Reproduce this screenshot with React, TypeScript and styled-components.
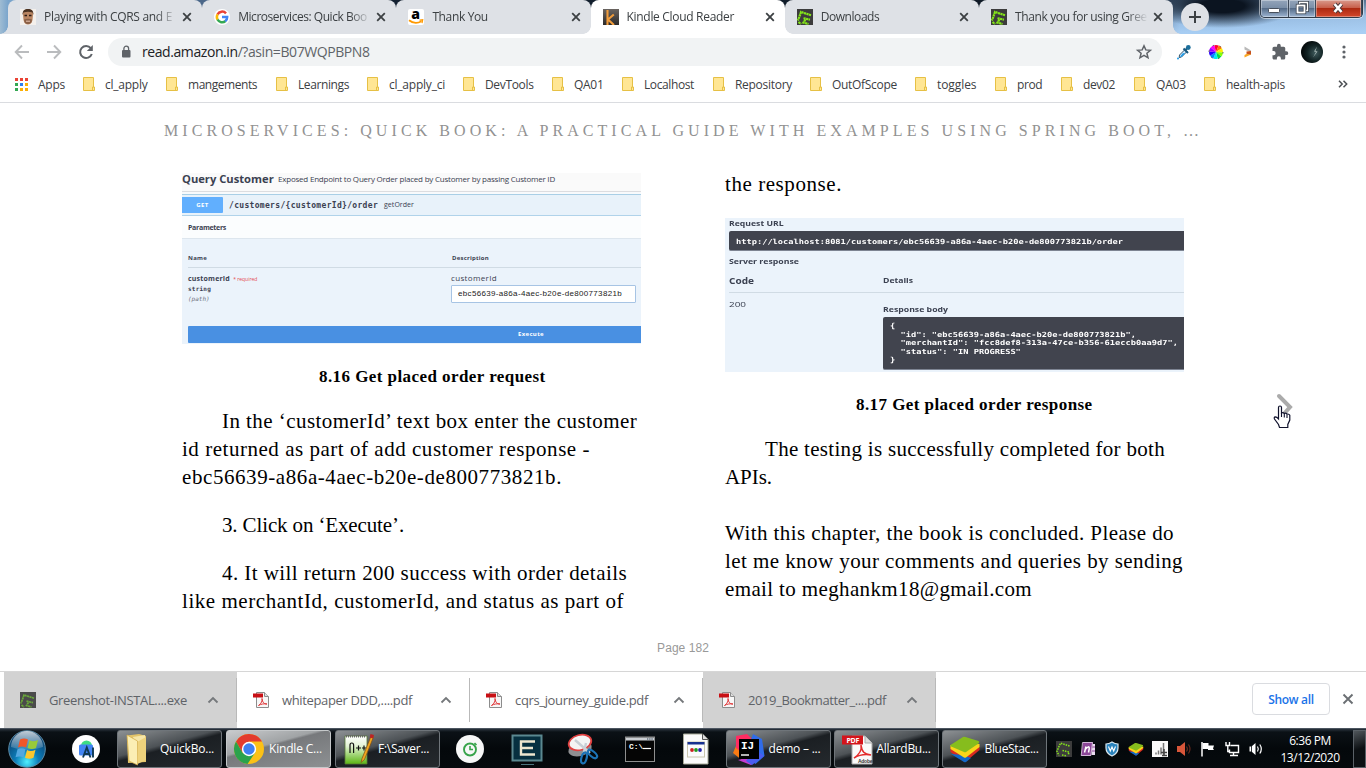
import React from "react";
import styled, { createGlobalStyle, css } from "styled-components";

const UI = `"Open Sans", "Noto Sans", sans-serif`;
const SERIF = `"Liberation Serif", serif`;
const MONO = `"DejaVu Sans Mono", monospace`;

const Global = createGlobalStyle`
  * { box-sizing: border-box; }
  body { margin: 0; background: #fff; overflow: hidden; }
  svg { display: block; flex: none; overflow: visible; }
`;

const Screen = styled.div`
  width: 1366px;
  height: 768px;
  display: flex;
  flex-direction: column;
  overflow: hidden;
  font-family: ${UI};
  font-size: 12px;
  color: #3c4043;
`;

/* ---------- tab strip ---------- */
const TabStrip = styled.div`
  position: relative;
  height: 34px;
  flex: none;
  display: flex;
  padding-left: 8px;
  background:
    radial-gradient(ellipse 75px 22px at 1222px 6px, #0b1420 30%, rgba(15, 26, 40, 0) 100%),
    linear-gradient(to bottom, rgba(60, 84, 112, 0.75) 0, rgba(150, 186, 222, 0.5) 16px, rgba(170, 208, 245, 0.9) 32px) 1165px 0 / 201px 34px no-repeat,
    linear-gradient(to right, #9fbcd3 0, #7aa5cc 8px, #4c6a8c 190px, #4a6486 215px, #142131 380px, #0d1722 1160px, #88b0dc 1180px, #a3c6ea 1366px);
`;

const Tab = styled.div<{ $active?: boolean; $first?: boolean; $last?: boolean }>`
  position: relative;
  width: 194.2px;
  height: 34px;
  flex: none;
  display: flex;
  align-items: center;
  padding: 0 11px 0 12px;
  gap: 8px;
  border-radius: 8px 8px 0 0;
  background: ${(p) => (p.$active ? "#fff" : "#dee1e6")};
  z-index: ${(p) => (p.$active ? 2 : 1)};
  ${(p) =>
    (p.$active || p.$first) &&
    css`
      &::before {
        content: "";
        position: absolute;
        left: -8px;
        bottom: 0;
        width: 8px;
        height: 8px;
        background: radial-gradient(circle at 0 0, transparent 7.5px, ${p.$active ? "#fff" : "#dee1e6"} 8px);
      }
    `}
  ${(p) =>
    (p.$active || p.$last) &&
    css`
      &::after {
        content: "";
        position: absolute;
        right: -8px;
        bottom: 0;
        width: 8px;
        height: 8px;
        background: radial-gradient(circle at 100% 0, transparent 7.5px, ${p.$active ? "#fff" : "#dee1e6"} 8px);
      }
    `}
`;

const TabTitle = styled.span<{ $ls: number }>`
  flex: 1;
  margin-right: -3px;
  white-space: nowrap;
  letter-spacing: ${(p) => p.$ls}px;
  line-height: 18px;
  mask-image: linear-gradient(to right, #000 calc(100% - 22px), transparent calc(100% - 1px));
`;

const TabDivider = styled.i`
  position: absolute;
  right: -1px;
  top: 8px;
  width: 1px;
  height: 19px;
  background: #80868b;
`;

const NewTab = styled.div`
  width: 28px;
  height: 28px;
  margin: 3px 0 0 8px;
  border-radius: 50%;
  background: #dee1e6;
  display: grid;
  place-items: center;
`;

const WindowControls = styled.div`
  display: flex;
  width: 103px;
  height: 18px;
  margin-left: 51px;
  border: 1px solid #2f3a48;
  border-top: 0;
  border-radius: 0 0 5px 5px;
  box-shadow: 0 0 0 1px rgba(255, 255, 255, 0.5);
  overflow: hidden;
`;

const WindowButton = styled.div<{ $w: number; $close?: boolean }>`
  width: ${(p) => p.$w}px;
  padding-bottom: 1px;
  display: grid;
  place-items: center;
  border-right: 1px solid #3c4858;
  box-shadow: inset 0 0 0 1px rgba(255, 255, 255, 0.35);
  background: ${(p) =>
    p.$close
      ? "linear-gradient(#d99a8c 0, #c8604c 45%, #ad2a12 50%, #d3482c 100%)"
      : "linear-gradient(#94a5ba 0, #7b8fa8 45%, #566c88 50%, #9db5d2 100%)"};
`;

/* ---------- toolbar ---------- */
const Toolbar = styled.div`
  height: 36px;
  flex: none;
  display: flex;
  align-items: center;
  background: #fff;
`;

const ToolSlot = styled.div<{ $w?: number }>`
  width: ${(p) => p.$w ?? 32}px;
  display: flex;
  justify-content: center;
`;

const AddressBar = styled.div`
  width: 1054px;
  height: 28px;
  display: flex;
  align-items: center;
  border-radius: 14px;
  background: #f1f3f4;
  padding: 0 10px 0 12px;
`;

const Url = styled.span`
  flex: 1;
  margin: -1px 0 0 10px;
  font-size: 14px;
  letter-spacing: -0.42px;
  color: #5f6368;
  b { font-weight: 400; color: #202124; }
`;

const BookmarkBar = styled.div`
  height: 33px;
  flex: none;
  display: flex;
  align-items: center;
  padding: 0 18px 4px 15px;
  border-bottom: 1px solid #dadce0;
  background: #fff;
`;

const Bookmark = styled.div<{ $w: number; $ls: number }>`
  width: ${(p) => p.$w}px;
  flex: none;
  display: flex;
  align-items: center;
  gap: 10px;
  white-space: nowrap;
  letter-spacing: ${(p) => p.$ls}px;
`;

/* ---------- reader ---------- */
const Reader = styled.main`
  position: relative;
  flex: 1;
  background: #fff;
  padding-top: 18px;
`;

const BookTitle = styled.h1`
  margin: 0 0 0 164px;
  font: 400 16px/20px ${SERIF};
  letter-spacing: 4.07px;
  white-space: nowrap;
  color: #929292;
`;

const Spread = styled.div`
  display: flex;
  gap: 84px;
  padding: 32px 182px 0;
  height: 499px;
`;

const Page = styled.article`
  width: 459px;
  color: #000;
`;

const Line = styled.p<{ $ls: number; $indent?: boolean; $before?: number }>`
  margin: ${(p) => p.$before ?? 0}px 0 0 ${(p) => (p.$indent ? 40 : 0)}px;
  font: 400 21px/28px ${SERIF};
  letter-spacing: ${(p) => p.$ls}px;
  white-space: nowrap;
`;

const Caption = styled.p<{ $left: number; $before: number }>`
  margin: ${(p) => p.$before}px 0 0 ${(p) => p.$left}px;
  font: 700 17px/22px ${SERIF};
  letter-spacing: 0.43px;
  white-space: nowrap;
`;

const PageNumber = styled.div`
  text-align: center;
  font: 12px/16px "Liberation Sans", sans-serif;
  letter-spacing: 0.05px;
  color: #999;
`;

const NextPage = styled.div`
  position: absolute;
  left: 1270px;
  top: 287px;
`;

/* ---------- figures ---------- */
const Label = styled.span<{
  $size: number;
  $ls?: number;
  $bold?: boolean;
  $mono?: boolean;
  $color?: string;
  $stretch?: number;
}>`
  display: inline-block;
  white-space: pre;
  font-family: ${(p) => (p.$mono ? MONO : UI)};
  font-size: ${(p) => p.$size}px;
  font-weight: ${(p) => (p.$bold ? 700 : 400)};
  letter-spacing: ${(p) => p.$ls ?? 0}px;
  color: ${(p) => p.$color ?? "#3b4151"};
  transform: scaleX(${(p) => p.$stretch ?? 1});
  transform-origin: 0 50%;
`;

const Figure = styled.figure<{ $h: number; $bg: string; $before?: number }>`
  margin: ${(p) => p.$before ?? 0}px 0 0;
  height: ${(p) => p.$h}px;
  background: ${(p) => p.$bg};
  line-height: 10px;
`;

const FigureRow = styled.div<{ $h: number; $pad?: number; $top?: number; $bottom?: number; $bg?: string; $line?: string }>`
  height: ${(p) => p.$h}px;
  display: flex;
  align-items: center;
  padding: ${(p) => p.$top ?? 0}px 0 ${(p) => p.$bottom ?? 0}px ${(p) => p.$pad ?? 0}px;
  background: ${(p) => p.$bg ?? "transparent"};
  border-bottom: ${(p) => (p.$line ? `1px solid ${p.$line}` : "0")};
`;

const Cell = styled.div<{ $w: number }>`
  width: ${(p) => p.$w}px;
  flex: none;
`;

const GetBadge = styled.div`
  width: 41px;
  height: 16px;
  margin-right: 6px;
  display: grid;
  place-items: center;
  border-radius: 0 1px 1px 0;
  background: #61affe;
`;

const TableRule = styled.div<{ $left: number }>`
  height: 1px;
  margin-left: ${(p) => p.$left}px;
  background: #d0dbe4;
`;

const ParamRow = styled.div`
  display: flex;
  height: 58px;
  padding: 4px 0 0 6px;
`;

const ParamName = styled.div`
  width: 263px;
  display: flex;
  flex-direction: column;
  align-items: flex-start;
`;

const ParamInput = styled.div`
  width: 185px;
  height: 18px;
  margin-top: 2px;
  padding: 0 0 2px 6px;
  display: flex;
  align-items: center;
  border: 1px solid #a7c4e4;
  border-radius: 1px;
  background: #fff;
  font: 8px "Liberation Sans", sans-serif;
  letter-spacing: 0.33px;
  color: #222;
`;

const ExecuteBar = styled.div`
  height: 17px;
  margin-left: 6px;
  padding: 0 0 1px 330px;
  display: flex;
  align-items: center;
  border-radius: 1px 0 0 1px;
  background: #4990e2;
`;

const DarkBox = styled.div<{ $h: number; $left: number; $pad: number; $top?: number }>`
  height: ${(p) => p.$h}px;
  margin-left: ${(p) => p.$left}px;
  padding-left: ${(p) => p.$pad}px;
  padding-top: ${(p) => p.$top ?? 0}px;
  display: flex;
  flex-direction: column;
  justify-content: center;
  align-items: flex-start;
  line-height: 8.5px;
  border-radius: 2px 0 0 2px;
  border-bottom: 1px solid #7d8492;
  background: #41444e;
`;

const ResponseArea = styled.div`
  display: flex;
  padding-left: 4px;
`;

/* ---------- download shelf ---------- */
const Shelf = styled.div`
  height: 57px;
  flex: none;
  display: flex;
  padding-left: 4px;
  border-top: 1px solid #d6d6d6;
  background: #fff;
`;

const Download = styled.div<{ $shaded?: boolean; $ls: number }>`
  position: relative;
  width: 233px;
  display: flex;
  align-items: center;
  padding: 0 18px 0 16px;
  background: ${(p) => (p.$shaded ? "#d2d2d2" : "#fff")};
  color: #5f6368;
  font-size: 13px;
  letter-spacing: ${(p) => p.$ls}px;
  span { flex: 1; margin-left: 13px; }
  &::after {
    content: "";
    position: absolute;
    right: 0;
    top: 6px;
    bottom: 6px;
    width: 1px;
    background: #b9b9b9;
  }
`;

const ShowAll = styled.button`
  width: 78px;
  height: 32px;
  margin: 11px 12px 0 316px;
  padding: 0;
  border: 1px solid #dadce0;
  border-radius: 4px;
  background: #fff;
  color: #1a73e8;
  font: 600 12px ${UI};
  letter-spacing: -0.33px;
`;

/* ---------- taskbar ---------- */
const Taskbar = styled.div`
  height: 40px;
  flex: none;
  display: flex;
  align-items: center;
  border-top: 1px solid #4c5560;
  background: linear-gradient(#2a333d 0, #0b1116 3px, #04080b 50%, #060a0d 100%);
`;

const Slot = styled.div<{ $w: number; $ml?: number }>`
  width: ${(p) => p.$w}px;
  margin-left: ${(p) => p.$ml ?? 0}px;
  display: flex;
  justify-content: center;
  flex: none;
`;

const TaskButton = styled.div<{ $active?: boolean; $ml?: number; $ls: number }>`
  width: 105px;
  height: 38px;
  margin-left: ${(p) => p.$ml ?? 0}px;
  margin-right: 4px;
  flex: none;
  display: flex;
  align-items: center;
  gap: 4px;
  padding-left: 6px;
  border: 1px solid ${(p) => (p.$active ? "#c5c8ca" : "#6f757a")};
  border-radius: 3px;
  color: #fff;
  letter-spacing: ${(p) => p.$ls}px;
  white-space: nowrap;
  background: ${(p) =>
    p.$active
      ? "linear-gradient(165deg, #c9cbcd 0, #a0a3a5 38%, #77797c 42%, #8d9092 100%)"
      : "linear-gradient(165deg, #8d9194 0, #4d5256 40%, #1b1f23 48%, #252a2e 100%)"};
`;

const Clock = styled.div`
  width: 85px;
  text-align: center;
  color: #fff;
  line-height: 17px;
  letter-spacing: -0.45px;
`;

const ShowDesktop = styled.div`
  width: 13px;
  height: 38px;
  border: 1px solid #5a6167;
  background: linear-gradient(160deg, #50565b, #0c1013 50%);
`;

/* ---------- icons ---------- */
const Cross = () => (
  <svg width="8" height="8" viewBox="0 0 8 8" stroke="#3c4043" strokeWidth="1.8" fill="none">
    <path d="M.2.200 7.800 7.800M7.800.2.200 7.800" />
  </svg>
);

const Face = () => (
  <svg width="16" height="16" viewBox="0 0 16 16">
    <rect width="16" height="16" fill="#f4f0ec" />
    <path d="M3 6C2.500 2 5 .5 8 .5s5.500 1.500 5 5.500l-.5 5c-.5 3-2.500 4.500-4.500 4.500S4 14 3.500 11z" fill="#b98562" />
    <path d="M2.500 6C2.500 1.500 4.500 0 8 0s5.500 1.500 5.500 6L12.500 3.500Q8 2 3.500 3.500z" fill="#4a3222" />
    <path d="M4 10.500q4-1.500 8 0l-.6 3Q8 16.500 4.600 13.500z" fill="#8a6047" />
    <path d="M4.500 6.500h2.500M9 6.500h2.500" stroke="#2c1a12" strokeWidth="1.300" />
    <path d="M6 12.200h4" stroke="#e9c4b0" strokeWidth="1" />
  </svg>
);

const Google = () => (
  <svg width="16" height="16" viewBox="0 0 16 16">
    <circle cx="8" cy="8" r="8" fill="#fff" />
    <g fill="none" strokeWidth="2.500">
      <path d="M12 4.300A5.200 5.200 0 0 0 3.500 5.500" stroke="#ea4335" />
      <path d="M3.600 5.300a5.400 5.400 0 0 0 0 5.400" stroke="#fbbc05" />
      <path d="M3.500 10.500a5.200 5.200 0 0 0 8 1.500" stroke="#34a853" />
      <path d="M8 8h5.200a5.300 5.300 0 0 1-2 4.300" stroke="#4285f4" />
    </g>
  </svg>
);

const Amazon = () => (
  <svg width="16" height="16" viewBox="0 0 16 16">
    <rect width="16" height="16" rx="2" fill="#fff" />
    <text x="7.500" y="9.500" textAnchor="middle" fontFamily="Open Sans" fontWeight="800" fontSize="14">a</text>
    <path d="M1 11.200q6 4.800 12.500 1" fill="none" stroke="#f90" strokeWidth="1.800" />
    <path d="M11.500 11.200l3.200-.4-.7 3.400" fill="none" stroke="#f90" strokeWidth="1.200" />
  </svg>
);

const Kindle = () => (
  <svg width="16" height="16" viewBox="0 0 16 16">
    <defs>
      <linearGradient id="kd" x2="0" y2="1"><stop stopColor="#6a6460" /><stop offset="1" stopColor="#2c2a2a" /></linearGradient>
      <clipPath id="kc"><rect width="16" height="16" /></clipPath>
    </defs>
    <rect width="16" height="16" fill="url(#kd)" />
    <path d="M4.500 1v15M10.800 5.500 5 10.500l6 5.500" fill="none" stroke="#f09c3c" strokeWidth="2.100" clipPath="url(#kc)" />
  </svg>
);

const Greenshot = ({ dim }: { dim?: boolean }) => (
  <svg width="16" height="16" viewBox="0 0 16 16">
    <rect width="16" height="16" fill={dim ? "#4a4a4a" : "#3c3c3c"} />
    <path
      d="M14 6.200 4 3 2.500 7.500.8 11.500M1.500 13l2.500 2M6.500 9.200l6.500 1.500M8.500 10.500l-2 3 5 1.500"
      fill="none"
      stroke={dim ? "#6aa83a" : "#84e619"}
      strokeWidth={dim ? 1.7 : 2.2}
      strokeDasharray="2.200 .4"
    />
  </svg>
);

const GreenshotTray = () => (
  <svg width="16" height="16" viewBox="0 0 16 16">
    <rect width="16" height="16" fill="#3c3c3c" />
    <path d="M13.500 5 4.500 2.200 2.500 6.500 1 10.500l2 4M6.500 9.500l6.500 1.500-.8 3M6 14l5 1" fill="none" stroke="#84e619" strokeWidth="1.500" strokeDasharray="1.500 1" />
  </svg>
);

const ArrowIcon = ({ flip }: { flip?: boolean }) => (
  <svg width="16" height="16" viewBox="0 0 16 16" fill="none" stroke="#babcbe" strokeWidth="1.900">
    <path d={flip ? "M1 8h13M8 1.500 14.300 8 8 14.500" : "M15 8H2M8 1.500 1.700 8 8 14.500"} />
  </svg>
);

const Reload = () => (
  <svg width="16" height="16" viewBox="0 0 16 16">
    <path d="M12.800 4.200A6 6 0 1 0 13.800 10" fill="none" stroke="#5f6368" strokeWidth="2" />
    <path d="M14.800 1v6H8.800z" fill="#5f6368" />
  </svg>
);

const Lock = () => (
  <svg width="12" height="14" viewBox="0 0 12 14">
    <rect x="2" y="5" width="8.500" height="7.500" rx="1" fill="#5f6368" />
    <path d="M3.900 5.500V3.500a2.350 2.350 0 0 1 4.700 0v2" fill="none" stroke="#5f6368" strokeWidth="1.300" />
  </svg>
);

const Star = () => (
  <svg width="16" height="16" viewBox="0 0 16 16">
    <path d="M8 1.800l1.800 4.100 4.600.4-3.500 3 1.100 4.500L8 11.400l-4 2.400 1.100-4.500-3.500-3 4.600-.4z" fill="none" stroke="#5f6368" strokeWidth="1.500" />
  </svg>
);

const Dropper = () => (
  <svg width="16" height="16" viewBox="0 0 16 16">
    <path d="M3.500 11 9 5.500 11 7.500 5.500 13l-2.300.6z" fill="#cfeaff" stroke="#35566e" strokeWidth="1" />
    <path d="M4 12.500 7 9l2 .5L5.500 13z" fill="#1e9be8" />
    <path d="M7.500 4.500 12 9M9.500 6 12.800 2.700" stroke="#17587e" strokeWidth="2" />
    <circle cx="12.300" cy="3.500" r="2.400" fill="#1b6f9c" />
    <circle cx="2" cy="14.500" r="1" fill="#1e9be8" />
  </svg>
);

const Wheel = () => (
  <svg width="16" height="16" viewBox="-8 -8 16 16">
    {["#f0f", "#f03", "#f70", "#fe0", "#8f0", "#0d4", "#0ee", "#08f", "#20f", "#90f"].map((c, i) => (
      <path key={c} d="M0 0 0-7A7 7 0 0 1 4.110-5.660Z" fill={c} transform={`rotate(${i * 36 - 50})`} />
    ))}
    <circle r="7" fill="none" stroke="#555" strokeWidth="1" strokeDasharray="1.500 5.830" />
  </svg>
);

const Fold = () => (
  <svg width="16" height="16" viewBox="0 0 16 16">
    <path d="M4.500 2.500 11 6.500v2L4.500 5.500z" fill="#b8b8b8" />
    <path d="M11 7.500v3L4.500 13.500V11z" fill="#f9a825" />
    <path d="M6.500 7.500 11 7v3.500l-4.500-.8z" fill="#c7521e" />
  </svg>
);

const Puzzle = () => (
  <svg width="18" height="18" viewBox="0 0 24 24">
    <path d="M20.500 11H19V7a2 2 0 0 0-2-2h-4V3.500a2.500 2.500 0 0 0-5 0V5H4a2 2 0 0 0-2 2v3.800h1.500a2.700 2.700 0 0 1 0 5.400H2V20c0 1.100.9 2 2 2h3.800v-1.500a2.700 2.700 0 0 1 5.400 0V22H17a2 2 0 0 0 2-2v-4h1.500a2.500 2.500 0 0 0 0-5z" fill="#5f6368" />
  </svg>
);

const Avatar = () => (
  <svg width="22" height="22" viewBox="0 0 22 22">
    <defs>
      <radialGradient id="av" cx=".65" cy=".55" r=".6"><stop stopColor="#3f5a5c" /><stop offset=".6" stopColor="#122324" /><stop offset="1" stopColor="#050b0c" /></radialGradient>
    </defs>
    <circle cx="11" cy="11" r="11" fill="url(#av)" />
    <path d="M16 5.500 13 10.500l2 .5-3 5.500 4.500-6-2-.5z" fill="#a3b3b0" />
  </svg>
);

const Dots = () => (
  <svg width="4" height="16" viewBox="0 0 4 16" fill="#5f6368">
    <circle cx="2" cy="3" r="1.600" /><circle cx="2" cy="8" r="1.600" /><circle cx="2" cy="13" r="1.600" />
  </svg>
);

const AppsGrid = () => (
  <svg width="13" height="13" viewBox="0 0 13 13">
    {["#ea4335", "#ea4335", "#ea4335", "#34a853", "#2d7ff0", "#fbaf05", "#34a853", "#fbaf05", "#fbaf05"].map((c, i) => (
      <rect key={i} x={(i % 3) * 5} y={Math.floor(i / 3) * 5} width="3" height="3" fill={c} />
    ))}
  </svg>
);

const Folder = () => (
  <svg width="12" height="14" viewBox="0 0 12 14">
    <path d="M.5.5h10v9.500h1v3.500H.5z" fill="#ffe694" stroke="#e6c045" />
    <path d="M9.500 13v-3h1.500" fill="none" stroke="#e6c045" />
  </svg>
);

const Pdf = () => (
  <svg width="16" height="16" viewBox="0 0 16 16">
    <path d="M3.500.5h8l4 4v11h-12z" fill="#f7f7f7" stroke="#8c8c8c" />
    <path d="M11.500.5v4h4" fill="#ddd" stroke="#8c8c8c" />
    <rect x="0" y="1.500" width="10" height="4" fill="#c80f14" />
    <path d="M5.500 13.500c3-2 4-5 3.500-7 .5 4 2 5.500 5 5.500-3-.5-6 0-8.500 1.500z" fill="none" stroke="#e0383a" />
  </svg>
);

const CaretUp = () => (
  <svg width="12" height="8" viewBox="0 0 12 8">
    <path d="M1.500 6.500 6 2l4.500 4.500" fill="none" stroke="#75787b" strokeWidth="1.800" />
  </svg>
);

const NextArrow = () => (
  <svg width="26" height="42" viewBox="0 0 26 42">
    <path d="M9 6 20 17l-8 9" fill="none" stroke="#ababab" strokeWidth="4" strokeLinecap="round" />
    <path
      d="M8.500 28.500V17.500q0-1.500 1.500-1.500t1.500 1.500V23q1.500-1 2.800.5 1.500-.8 2.700.6 2-.4 2.800 1.200v4.700l-2 4.500v3H9.500l-1-3-4-5.500q-.8-2 .8-2.200 1.500 0 3.200 2z"
      fill="#fff"
      stroke="#10122c"
      strokeWidth="1.200"
    />
    <path d="M11.500 23v4M14.300 24v3.500M17 24.500v3.500" stroke="#10122c" strokeWidth="1.100" />
  </svg>
);

const StartOrb = () => (
  <svg width="38" height="38" viewBox="0 0 38 38">
    <defs>
      <radialGradient id="orb" cx=".5" cy=".85" r=".8"><stop stopColor="#4ff0ff" /><stop offset=".4" stopColor="#0c7cb8" /><stop offset="1" stopColor="#0a3a66" /></radialGradient>
      <linearGradient id="gl" x2="0" y2="1"><stop stopColor="#fff" stopOpacity=".75" /><stop offset="1" stopColor="#fff" stopOpacity=".12" /></linearGradient>
    </defs>
    <circle cx="19" cy="19" r="18.300" fill="url(#orb)" stroke="#5d8ba5" />
    <path d="M3 17a16 16 0 0 1 32 0q-16 6-32 0z" fill="url(#gl)" />
    <path d="M12 9.500q4-2 8 0l-2 8q-4-1.800-8 0z" fill="#f0562a" />
    <path d="M21.500 10.300q4 2 8.500-.3l-2 8q-4 2-8.500 0z" fill="#98cb3a" />
    <path d="M9.500 19.300q4-2 8 0l-2 8q-4-1.800-8 0z" fill="#52a7e0" />
    <path d="M19 20q4 2 8.500-.3l-2 8q-4 2-8.500 0z" fill="#fcc72e" />
  </svg>
);

const AndroidStudio = () => (
  <svg width="28" height="28" viewBox="0 0 28 28">
    <circle cx="14" cy="14" r="14" fill="#fff" />
    <path d="M9 11a5.500 5.500 0 0 1 11 0z" fill="#3ddc84" />
    <rect x="7" y="9.500" width="14" height="11" rx="1.500" fill="#4285f4" />
    <path d="M11 22.500 14.800 12.500l3.700 10M12 19h5.500M21 12.500v10" stroke="#0f3a55" strokeWidth="1.900" fill="none" />
  </svg>
);

const Explorer = () => (
  <svg width="32" height="34" viewBox="0 0 32 34">
    <path d="M3 3.500 15 2l7 2v26l-18 1z" fill="#e3c46a" />
    <path d="M9 5 21 3l1 25-9 1z" fill="#f6e6a8" />
    <path d="M3 3 13.500 9v24L5 29z" fill="#fbeeb4" stroke="#d4af4e" strokeWidth=".8" />
    <path d="M14 9.500 22 5v23l-8.500 4z" fill="#eed27c" />
  </svg>
);

const Chrome = () => (
  <svg width="32" height="32" viewBox="0 0 32 32">
    <circle cx="16" cy="16" r="15" fill="#fbc116" />
    <path d="M3 8.500A15 15 0 0 1 29 8.500H16L9.500 19.800z" fill="#e33b2e" />
    <path d="M3 8.500A15 15 0 0 0 14.500 31l8-12L9.500 19.800z" fill="#2ba24c" />
    <circle cx="16" cy="16" r="7.200" fill="#fff" />
    <circle cx="16" cy="16" r="5.700" fill="#3f80f0" />
  </svg>
);

const NotepadPP = () => (
  <svg width="32" height="32" viewBox="0 0 32 32">
    <defs><linearGradient id="np" x2="0" y2="1"><stop stopColor="#fff" /><stop offset=".35" stopColor="#e4f3d6" /><stop offset="1" stopColor="#5bb512" /></linearGradient></defs>
    <path d="M3 3h22v28H3z" fill="url(#np)" stroke="#557a38" strokeWidth=".8" />
    <path d="M4 3.200h20" stroke="#666" strokeWidth="2.500" strokeDasharray="1 1" />
    <path d="M8 20v-8q0-2 1.800-2t1.800 2v8M14 15h5M16.500 12.500v5M20 15h4M22 12.500v5" fill="none" stroke="#111" strokeWidth="1.200" />
    <path d="M29.500 2 20 25.500l-1 4 3.500-3L31.500 4z" fill="#f0a51e" stroke="#7b4c16" strokeWidth=".7" />
    <path d="M28.500 1l3.500 1-1 3.500-3.300-1z" fill="#bd2323" />
  </svg>
);

const StopWatch = () => (
  <svg width="28" height="28" viewBox="0 0 28 28">
    <circle cx="14" cy="14" r="14" fill="#f7f7f7" />
    <circle cx="14" cy="14.500" r="6" fill="none" stroke="#37a34a" strokeWidth="1.900" />
    <path d="M14 11V14.500h3M18.500 8l2 2" fill="none" stroke="#37a34a" strokeWidth="1.600" />
  </svg>
);

const Cisdem = () => (
  <svg width="32" height="34" viewBox="0 0 32 34">
    <rect x="1.500" y="3.500" width="29" height="25" fill="#073040" stroke="#5b8890" strokeWidth="2" />
    <path d="M24 9.500H10v13h14M10 16h12" fill="none" stroke="#eee6cf" strokeWidth="2.400" />
    <path d="M10 32.500h13" stroke="#4d757e" />
  </svg>
);

const Snip = () => (
  <svg width="32" height="34" viewBox="0 0 32 34">
    <ellipse cx="13" cy="17" rx="12" ry="7" fill="#8f8f92" transform="rotate(-15 13 17)" />
    <ellipse cx="13" cy="10.500" rx="11.500" ry="7.500" fill="#f4f4f4" stroke="#e04040" strokeWidth="1.800" transform="rotate(-15 13 10.500)" />
    <path d="M8 8 23 21M19 11 16.500 22" stroke="#c9d0d6" strokeWidth="2.400" />
    <ellipse cx="17" cy="26" rx="2.600" ry="5.500" fill="none" stroke="#1c73b6" strokeWidth="2.200" transform="rotate(15 17 26)" />
    <ellipse cx="25.500" cy="22" rx="2.600" ry="5.500" fill="none" stroke="#1c73b6" strokeWidth="2.200" transform="rotate(-50 25.500 22)" />
  </svg>
);

const Cmd = () => (
  <svg width="32" height="28" viewBox="0 0 32 28">
    <rect x="1.500" y="2" width="29" height="24.500" fill="#050505" stroke="#8e8e8e" />
    <rect x="2" y="2.500" width="28" height="3" fill="#c9cdd2" />
    <path d="M23 4h6" stroke="#345" strokeWidth="1.200" strokeDasharray="1.300 .9" />
    <text x="5" y="13.500" fontFamily="Liberation Mono" fontWeight="700" fontSize="8" fill="#fff">C:\</text>
    <path d="M19 13.500h8" stroke="#fff" strokeWidth="1.200" />
  </svg>
);

const Script = () => (
  <svg width="32" height="32" viewBox="0 0 32 32">
    <path d="M3.500 1h19l5.500 5.500V31H3.500z" fill="#fbfbfb" stroke="#a7a998" />
    <path d="M22.500 1v5.500H28" fill="#ddd" stroke="#555" />
    <rect x="7.500" y="9" width="17" height="15" fill="#fbfbfd" stroke="#c9c6ae" />
    <rect x="7.500" y="9" width="17" height="2.500" fill="#17308f" />
    <circle cx="12" cy="17" r="1.900" fill="#c22" /><circle cx="16" cy="17" r="1.900" fill="#292" /><circle cx="20" cy="17" r="1.900" fill="#22a" />
  </svg>
);

const IntelliJ = () => (
  <svg width="32" height="32" viewBox="0 0 32 32">
    <path d="M0 20 3 13l10 4-3 11z" fill="#f97a12" />
    <path d="M3 3 14 1l8 8-9 14L3 15z" fill="#fe2d62" />
    <path d="M20 1l9 5 2.500 17-9 8-10-8z" fill="#2f6ce9" />
    <path d="M5 27 18 24l6 3-6 5z" fill="#c23cd2" />
    <path d="M22 16l9 7-12 9-6-4z" fill="#4b5cf0" />
    <rect x="6" y="6" width="20" height="20" fill="#000" />
    <text x="8" y="16" fontFamily="Liberation Mono" fontWeight="700" fontSize="11" fill="#fff">IJ</text>
    <path d="M8 22h8" stroke="#fff" strokeWidth="1.400" />
  </svg>
);

const AdobePdf = () => (
  <svg width="32" height="32" viewBox="0 0 32 32">
    <path d="M11 3h13l7 7v21H11z" fill="#fafafa" stroke="#aaa" />
    <path d="M24 3v7h7" fill="#ddd" stroke="#aaa" />
    <rect x="1" y="2.500" width="21" height="9" fill="#d4141b" />
    <text x="5.500" y="9.700" fontFamily="Open Sans" fontWeight="700" fontSize="7" fill="#fff">PDF</text>
    <path d="M13 25c6-4 8-8 7-13 1 7 3 9 10 10-6-1-12 0-17 3z" fill="none" stroke="#e32c2c" strokeWidth="1.500" />
    <text x="17" y="29.500" fontFamily="Liberation Sans" fontWeight="700" fontSize="5" fill="#333">Adobe</text>
  </svg>
);

const Stacks = ({ s = 32 }: { s?: number }) => (
  <svg width={s} height={s} viewBox="0 0 32 32">
    <path d="M1.500 19 15 28.500q1 .5 2 0L30.500 17v-3H1.500z" fill="#d92a20" />
    <path d="M2 21 15 29q1 .5 2 0l5-4-8-3z" fill="#1268c9" />
    <path d="M1.500 16 15 24.500q1 .5 2 0L30.500 14v-3L1.500 12z" fill="#fbd51a" />
    <path d="M1.500 12 14 4q1-.5 2.500 0L29.500 8q1.500.8 0 2.500L17 19q-1 .6-2 0L1.500 13.200z" fill="#86bd1d" />
  </svg>
);

const OneNote = () => (
  <svg width="16" height="16" viewBox="0 0 16 16">
    <path d="M3 1h10l-2 14H1z" fill="#8c4798" />
    <path d="M12.500 3H15v11h-3.500z" fill="#eadcf0" />
    <path d="M12 6h3M12 10h3" stroke="#8c4798" />
    <path d="M4.500 11.500 6 5.500M5.200 8.500q4.300-5 4-.5L8.500 11.500" fill="none" stroke="#fff" strokeWidth="1.500" />
    <path d="M2.500 1.500h10l-1.700 13H1.200z" fill="none" stroke="#e6d3ea" strokeWidth=".8" />
  </svg>
);

const Shield = () => (
  <svg width="14" height="16" viewBox="0 0 14 16">
    <path d="M7 1q3 2 6 2v4q0 5.500-6 8Q1 12.500 1 7V3q3 0 6-2z" fill="#2a83bd" stroke="#dbe9f1" strokeWidth="1.200" />
    <path d="M3.500 5.500 5.300 10 7 6l1.700 4 1.800-4.500" fill="none" stroke="#fff" strokeWidth="1.100" />
  </svg>
);

const Signal = () => (
  <svg width="16" height="16" viewBox="0 0 16 16">
    <rect width="16" height="16" fill="#fafafa" />
    <path d="M4 13.500v-2M6.500 13.500v-4M9 13.500V6.500M11.500 13.500V2" stroke="#777" strokeWidth="1.500" />
    <path d="M9 11.500h6M10 14.500h5M12 8v7" stroke="#444" strokeWidth="1.500" />
  </svg>
);

const RedSpeaker = () => (
  <svg width="16" height="16" viewBox="0 0 16 16">
    <path d="M1 5h3l5-4v14l-5-4H1z" fill="#d8563a" />
    <path d="M10.500 5.500q1.800 2.500 0 5M12.500 3.500q3 4.500 0 9" fill="none" stroke="#6b2a1e" strokeWidth="1.100" />
  </svg>
);

const WhiteSpeaker = () => (
  <svg width="16" height="16" viewBox="0 0 16 16">
    <path d="M1.500 5.500h1.500v5H1.500zM3.800 5.200 7.500 2v12L3.800 10.800z" fill="#fff" />
    <path d="M9.500 5.500q1.600 2.500 0 5M11.800 3.500q3 4.500 0 9" fill="none" stroke="#fff" strokeWidth="1.200" />
  </svg>
);

const Flag = () => (
  <svg width="16" height="16" viewBox="0 0 16 16">
    <path d="M2 1v14.500" stroke="#fff" strokeWidth="1.500" />
    <path d="M2.500 2h6v2.500h5.500l-1 3 1 1.500H8V8H2.500z" fill="#fff" />
  </svg>
);

const Network = () => (
  <svg width="16" height="16" viewBox="0 0 16 16" fill="none" stroke="#fff" strokeWidth="1.400">
    <path d="M6.500 4.500h8v7h-9v-3M9.500 11.500v3M6 14.500h8M2 1v3.500h3.500V1M3.800 4.500v6H6" />
  </svg>
);

/* ---------- data ---------- */
const bookmarks: [string, number, number][] = [
  ["cl_apply", 83, -0.24],
  ["mangements", 110, -0.46],
  ["Learnings", 91, -0.4],
  ["cl_apply_ci", 96, -0.22],
  ["DevTools", 89, -0.34],
  ["QA01", 70, -0.29],
  ["Localhost", 91, -0.39],
  ["Repository", 97, -0.29],
  ["OutOfScope", 105, -0.3],
  ["toggles", 80, -0.07],
  ["prod", 66, -0.4],
  ["dev02", 73, -0.36],
  ["QA03", 70, -0.16],
  ["health-apis", 134, -0.28],
];

const tabs = [
  { title: "Playing with CQRS and E", ls: -0.31, icon: <Face /> },
  { title: "Microservices: Quick Boo", ls: -0.46, icon: <Google /> },
  { title: "Thank You", ls: -0.36, icon: <Amazon /> },
  { title: "Kindle Cloud Reader", ls: -0.31, icon: <Kindle />, active: true },
  { title: "Downloads", ls: -0.45, icon: <Greenshot /> },
  { title: "Thank you for using Gree", ls: -0.36, icon: <Greenshot /> },
];

export default function App() {
  return (
    <Screen>
      <Global />
      <TabStrip>
        {tabs.map((t, i) => (
          <Tab key={t.title} $active={t.active} $first={i === 0} $last={i === 5}>
            {t.icon}
            <TabTitle $ls={t.ls}>{t.title}</TabTitle>
            <Cross />
            {(i < 2 || i === 4) && <TabDivider />}
          </Tab>
        ))}
        <NewTab>
          <svg width="12" height="12" viewBox="0 0 12 12" stroke="#3c4043" strokeWidth="2">
            <path d="M6 0v12M0 6h12" />
          </svg>
        </NewTab>
        <WindowControls>
          <WindowButton $w={28}>
            <svg width="14" height="14" viewBox="0 0 14 14"><rect x="1.500" y="7.500" width="11" height="4" rx="1" fill="#fff" stroke="#48505c" /></svg>
          </WindowButton>
          <WindowButton $w={27}>
            <svg width="14" height="14" viewBox="0 0 14 14" fill="none">
              <path d="M4.500 3.500v-2h8v8h-2" stroke="#3d4652" strokeWidth="3" /><path d="M4.500 3.500v-2h8v8h-2" stroke="#fff" strokeWidth="1.300" />
              <rect x="2.500" y="4.500" width="7" height="7" stroke="#3d4652" strokeWidth="3.400" /><rect x="2.500" y="4.500" width="7" height="7" stroke="#fff" strokeWidth="1.800" />
            </svg>
          </WindowButton>
          <WindowButton $w={47} $close>
            <svg width="14" height="12" viewBox="0 0 14 12">
              <path d="M3.500 2l7 8M10.500 2l-7 8" stroke="#4c3a3c" strokeWidth="4.400" /><path d="M3.500 2l7 8M10.500 2l-7 8" stroke="#fff" strokeWidth="2.600" />
            </svg>
          </WindowButton>
        </WindowControls>
      </TabStrip>

      <Toolbar>
        <ToolSlot $w={6} />
        <ToolSlot><ArrowIcon /></ToolSlot>
        <ToolSlot><ArrowIcon flip /></ToolSlot>
        <ToolSlot><Reload /></ToolSlot>
        <ToolSlot $w={6} />
        <AddressBar>
          <Lock />
          <Url><b>read.amazon.in</b>/?asin=B07WQPBPN8</Url>
          <Star />
        </AddressBar>
        <ToolSlot $w={6} />
        <ToolSlot><Dropper /></ToolSlot>
        <ToolSlot><Wheel /></ToolSlot>
        <ToolSlot><Fold /></ToolSlot>
        <ToolSlot><Puzzle /></ToolSlot>
        <ToolSlot><Avatar /></ToolSlot>
        <ToolSlot><Dots /></ToolSlot>
      </Toolbar>

      <BookmarkBar>
        <Bookmark $w={68} $ls={-0.25}><AppsGrid />Apps</Bookmark>
        {bookmarks.map(([name, w, ls]) => (
          <Bookmark key={name} $w={w} $ls={ls}><Folder />{name}</Bookmark>
        ))}
        <ToolSlot $w={10}>
          <svg width="10" height="8" viewBox="0 0 10 8" fill="none" stroke="#4c5054" strokeWidth="1.500">
            <path d="M1 .8 4.200 4 1 7.200M5.500.8 8.700 4 5.500 7.200" />
          </svg>
        </ToolSlot>
      </BookmarkBar>

      <Reader>
        <BookTitle>MICROSERVICES: QUICK BOOK: A PRACTICAL GUIDE WITH EXAMPLES USING SPRING BOOT, …</BookTitle>
        <Spread>
          <Page>
            <Figure $h={171} $bg="#ebf3fb">
              <FigureRow $h={19} $bottom={6} $bg="#fafafa" $line="#dcdde0">
                <Cell $w={96}><Label $size={11.2} $bold>Query Customer</Label></Cell>
                <Label $size={8} $ls={-0.215}>Exposed Endpoint to Query Order placed by Customer by passing Customer ID</Label>
              </FigureRow>
              <FigureRow $h={3} $bg="#f8fafc" $line="#a9cfe6" />
              <FigureRow $h={21} $bg="#e8f2fa" $line="#b0d3ea">
                <GetBadge><Label $size={6} $ls={0.5} $bold $color="#fff">GET</Label></GetBadge>
                <Cell $w={155}><Label $size={8} $mono $bold $ls={0.322}>{"/customers/{customerId}/order"}</Label></Cell>
                <Label $size={7} $ls={0.05}>getOrder</Label>
              </FigureRow>
              <FigureRow $h={23} $pad={6} $top={2} $bg="#fbfdfe" $line="#dde6ee">
                <Label $size={7} $ls={-0.28} $bold>Parameters</Label>
              </FigureRow>
              <FigureRow $h={28} $pad={6} $top={9}>
                <Cell $w={264}><FigureRow $h={10}><Label $size={6} $ls={0.26} $bold>Name</Label></FigureRow></Cell>
                <Label $size={6} $ls={0.22} $bold>Description</Label>
              </FigureRow>
              <TableRule $left={6} />
              <ParamRow>
                <ParamName>
                  <span>
                    <Label $size={7} $ls={0.2} $bold>customerId</Label>{" "}
                    <Label $size={5} $color="#e5484d">* required</Label>
                  </span>
                  <Label $size={6} $ls={0.22} $mono $bold>string</Label>
                  <Label $size={6} $mono $color="#6b6f7b"><i>(path)</i></Label>
                </ParamName>
                <div>
                  <Label $size={8} $ls={0.35}>customerId</Label>
                  <ParamInput>ebc56639-a86a-4aec-b20e-de800773821b</ParamInput>
                </div>
              </ParamRow>
              <ExecuteBar><Label $size={6} $ls={0.35} $bold $color="#fff">Execute</Label></ExecuteBar>
            </Figure>
            <Caption $left={137} $before={22}>8.16 Get placed order request</Caption>
            <Line $indent $ls={0.445} $before={19}>In the ‘customerId’ text box enter the customer</Line>
            <Line $ls={0.528}>id returned as part of add customer response -</Line>
            <Line $ls={0.578}>ebc56639-a86a-4aec-b20e-de800773821b.</Line>
            <Line $indent $ls={-0.13} $before={20}>3. Click on ‘Execute’.</Line>
            <Line $indent $ls={0.431} $before={20}>4. It will return 200 success with order details</Line>
            <Line $ls={0.548}>like merchantId, customerId, and status as part of</Line>
          </Page>
          <Page>
            <Line $ls={0.567} $before={-3}>the response.</Line>
            <Figure $h={154} $bg="#ebf3fb" $before={20}>
              <FigureRow $h={13} $pad={4} $bottom={2}><Label $size={7} $bold $stretch={1.236}>Request URL</Label></FigureRow>
              <DarkBox $h={20} $left={4} $pad={7} $top={3}>
                <Label $size={7} $mono $bold $color="#fff" $stretch={1.241}>http://localhost:8081/customers/ebc56639-a86a-4aec-b20e-de800773821b/order</Label>
              </DarkBox>
              <FigureRow $h={20} $pad={4} $top={1}><Label $size={7} $bold $stretch={1.248}>Server response</Label></FigureRow>
              <FigureRow $h={21} $pad={4} $bottom={2}>
                <Cell $w={154}><Label $size={8} $bold $stretch={1.26}>Code</Label></Cell>
                <Label $size={7} $bold $stretch={1.235}>Details</Label>
              </FigureRow>
              <TableRule $left={4} />
              <ResponseArea>
                <Cell $w={154}>
                  <FigureRow $h={22}><Label $size={8} $stretch={1.24}>200</Label></FigureRow>
                </Cell>
                <div>
                  <FigureRow $h={7} />
                  <FigureRow $h={17} $top={2}><Label $size={7} $bold $stretch={1.245}>Response body</Label></FigureRow>
                </div>
              </ResponseArea>
              <DarkBox $h={53} $left={158} $pad={7} $top={1}>
                {[
                  "{",
                  '  "id": "ebc56639-a86a-4aec-b20e-de800773821b",',
                  '  "merchantId": "fcc8def8-313a-47ce-b356-61eccb0aa9d7",',
                  '  "status": "IN PROGRESS"',
                  "}",
                ].map((l) => (
                  <Label key={l} $size={7} $mono $bold $color="#fff" $stretch={1.242}>{l}</Label>
                ))}
              </DarkBox>
            </Figure>
            <Caption $left={131} $before={22}>8.17 Get placed order response</Caption>
            <Line $indent $ls={0.303} $before={19}>The testing is successfully completed for both</Line>
            <Line $ls={-0.05}>APIs.</Line>
            <Line $ls={0.421} $before={28}>With this chapter, the book is concluded. Please do</Line>
            <Line $ls={0.429}>let me know your comments and queries by sending</Line>
            <Line $ls={0.367}>email to meghankm18@gmail.com</Line>
          </Page>
        </Spread>
        <NextPage><NextArrow /></NextPage>
        <PageNumber>Page 182</PageNumber>
      </Reader>

      <Shelf>
        <Download $shaded $ls={-0.344}><Greenshot dim /><span>Greenshot-INSTAL....exe</span><CaretUp /></Download>
        <Download $ls={-0.363}><Pdf /><span>whitepaper DDD,....pdf</span><CaretUp /></Download>
        <Download $ls={-0.341}><Pdf /><span>cqrs_journey_guide.pdf</span><CaretUp /></Download>
        <Download $shaded $ls={-0.394}><Pdf /><span>2019_Bookmatter_....pdf</span><CaretUp /></Download>
        <ShowAll>Show all</ShowAll>
        <Slot $w={12}><svg width="10" height="54" viewBox="0 0 10 54" fill="none" stroke="#6b6f73" strokeWidth="1.900"><path d="M.5 22.500l9 9M9.500 22.500l-9 9" /></svg></Slot>
      </Shelf>

      <Taskbar>
        <Slot $w={54}><StartOrb /></Slot>
        <Slot $w={63}><AndroidStudio /></Slot>
        <TaskButton $ls={-0.22}><Explorer />QuickBo...</TaskButton>
        <TaskButton $ls={-0.18} $active><Chrome />Kindle C...</TaskButton>
        <TaskButton $ls={-0.28}><NotepadPP />F:\Saver...</TaskButton>
        <Slot $w={56.5} $ml={-2}><StopWatch /></Slot>
        <Slot $w={56.5}><Cisdem /></Slot>
        <Slot $w={56.5}><Snip /></Slot>
        <Slot $w={56.5}><Cmd /></Slot>
        <Slot $w={56.5}><Script /></Slot>
        <TaskButton $ls={-0.21} $ml={1}><IntelliJ />demo – ...</TaskButton>
        <TaskButton $ls={-0.28} $ml={-1}><AdobePdf />AllardBu...</TaskButton>
        <TaskButton $ls={-0.33} $ml={-1}><Stacks />BlueStac...</TaskButton>
        <Slot $w={24} $ml={1}><GreenshotTray /></Slot>
        <Slot $w={24}><OneNote /></Slot>
        <Slot $w={24}><Shield /></Slot>
        <Slot $w={24}><Stacks s={16} /></Slot>
        <Slot $w={24}><Signal /></Slot>
        <Slot $w={24}><RedSpeaker /></Slot>
        <Slot $w={24}><Flag /></Slot>
        <Slot $w={24}><Network /></Slot>
        <Slot $w={24}><WhiteSpeaker /></Slot>
        <Clock>6:36 PM<br />13/12/2020</Clock>
        <ShowDesktop />
      </Taskbar>
    </Screen>
  );
}
